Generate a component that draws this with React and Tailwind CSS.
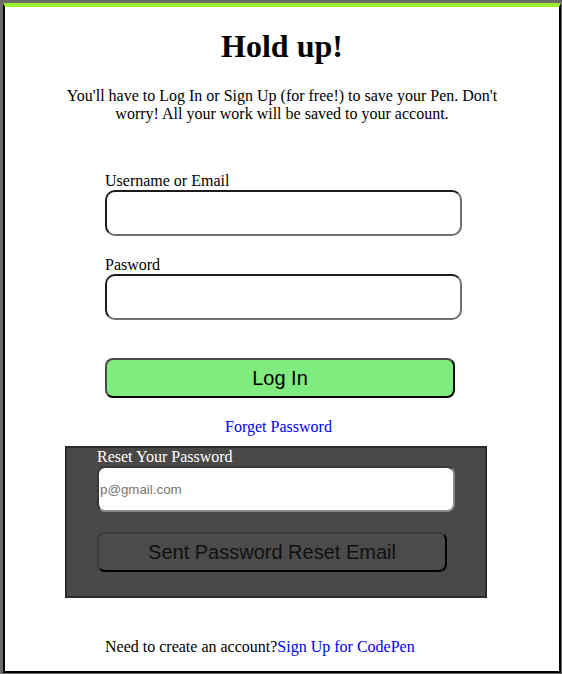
import React from "react";

const serif = { fontFamily: '"Liberation Serif", "Times New Roman", serif' };

const Field = ({ label, type = "text" }) => (
  <div className="flex flex-col">
    <label className="text-[16px] leading-[18px] text-black">{label}</label>
    <input
      type={type}
      className="w-[357px] h-[46px] rounded-[10px] border-2 border-t-[#1c1c1c] border-l-[#1c1c1c] border-b-[#707070] border-r-[#707070] bg-white outline-none"
    />
  </div>
);

export default function App() {
  return (
    <div
      className="w-[562px] h-[674px] bg-[#6a6a6a] pt-[3px] pl-[3px] pr-px pb-px flex"
      style={serif}
    >
      <div className="flex-1 flex flex-col bg-white border-2 border-black border-t-4 border-t-[#9ded2e] overflow-hidden">
        <h1 className="mt-[21px] text-center text-[32px] leading-[37px] font-bold text-black">
          Hold up!
        </h1>
        <p className="mt-[22px] mx-auto w-[444px] text-center text-[16px] leading-[18px] text-black">
          You'll have to Log In or Sign Up (for free!) to save your Pen. Don't
          worry! All your work will be saved to your account.
        </p>

        {/* login form */}
        <div className="mt-[49px] ml-[100px] w-[347px] flex flex-col">
          <Field label="Username or Email" />
          <div className="mt-[20px]">
            <Field label="Pasword" type="password" />
          </div>
          <button
            className="mt-[38px] w-[350px] h-[40px] rounded-[8px] border-2 border-t-[#4a4a4a] border-l-[#4a4a4a] border-b-black border-r-black bg-[#80ec80] text-[20px] text-black"
            style={{ fontFamily: '"Liberation Sans", Arial, sans-serif' }}
          >
            Log In
          </button>
          <a className="mt-[20px] text-center text-[16px] leading-[18px] text-[#0000ee] cursor-pointer">
            Forget Password
          </a>
        </div>

        {/* reset box */}
        <div className="mt-[10px] ml-[60px] w-[422px] bg-[#4a4846] border-2 border-[#2b2b2b] pl-[30px] pb-[24px] flex flex-col">
          <span className="text-[16px] leading-[18px] text-white">Reset Your Password</span>
          <input
            placeholder="p@gmail.com"
            className="w-[358px] h-[46px] rounded-[8px] border-2 border-t-[#3a3a3a] border-l-[#3a3a3a] border-b-[#8a8a8a] border-r-[#8a8a8a] bg-white px-px text-[13.33px] placeholder:text-[#757575] outline-none"
            style={{ fontFamily: '"Liberation Sans", Arial, sans-serif' }}
          />
          <button
            className="mt-[20px] w-[350px] h-[40px] rounded-[8px] border-2 border-t-[#3c3c3c] border-l-[#3c3c3c] border-b-black border-r-black bg-[#4b4b4b] text-[20px] text-[#111111]"
            style={{ fontFamily: '"Liberation Sans", Arial, sans-serif' }}
          >
            Sent Password Reset Email
          </button>
        </div>

        <p className="mt-[40px] ml-[100px] text-[16px] leading-[18px] text-black">
          Need to create an account?
          <a className="text-[#0000ee] cursor-pointer">Sign Up for CodePen</a>
        </p>
      </div>
    </div>
  );
}
